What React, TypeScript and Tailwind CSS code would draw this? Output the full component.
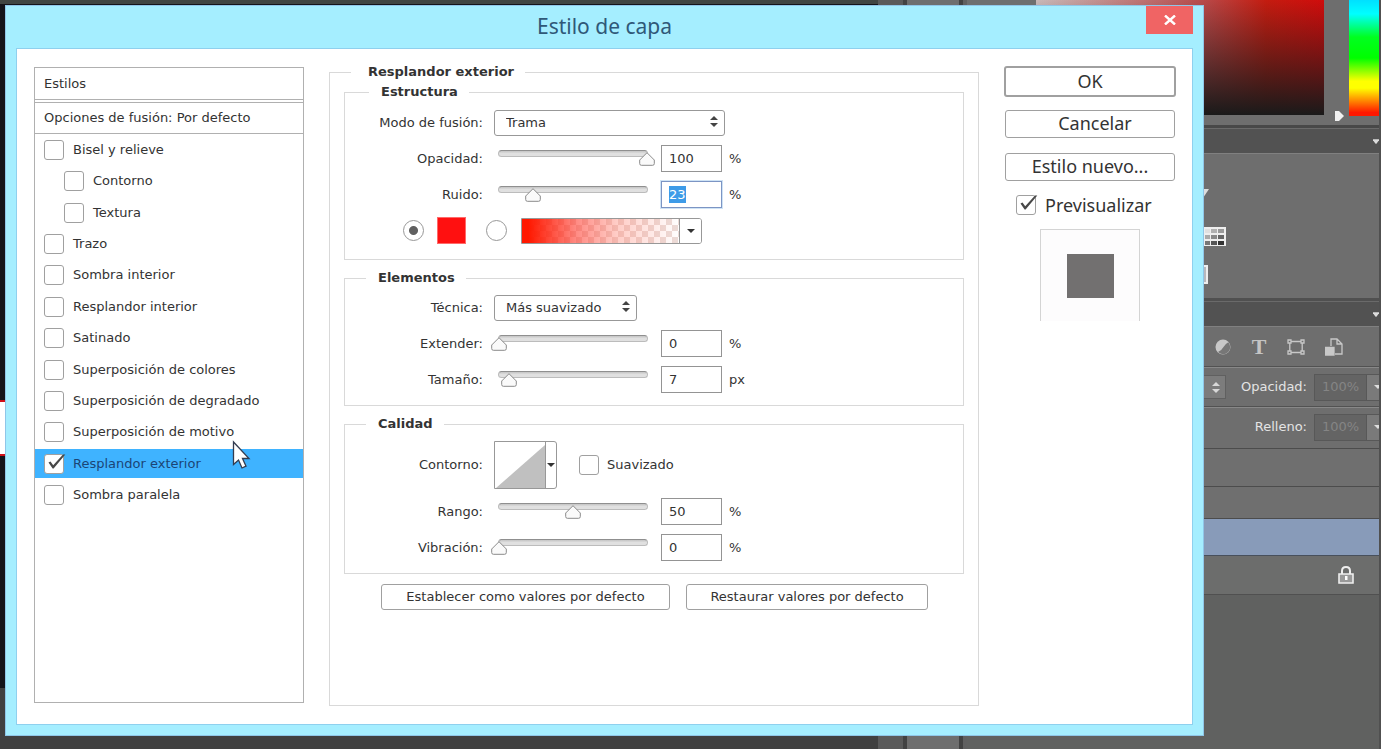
import { useState, type ReactNode } from "react";

type Effect = { name: string; nested?: boolean; checked?: boolean };

const EFFECTS: Effect[] = [
  { name: "Bisel y relieve" },
  { name: "Contorno", nested: true },
  { name: "Textura", nested: true },
  { name: "Trazo" },
  { name: "Sombra interior" },
  { name: "Resplandor interior" },
  { name: "Satinado" },
  { name: "Superposición de colores" },
  { name: "Superposición de degradado" },
  { name: "Superposición de motivo" },
  { name: "Resplandor exterior", checked: true },
  { name: "Sombra paralela" },
];

function Check({ id, defaultChecked }: { id: string; defaultChecked?: boolean }) {
  return (
    <span className="relative block size-5 shrink-0">
      <input
        id={id}
        type="checkbox"
        defaultChecked={defaultChecked}
        className="peer block size-5 appearance-none rounded-[3px] border border-[#a0a0a0] bg-white"
      />
      <svg
        viewBox="0 0 22 20"
        className="pointer-events-none absolute top-0 left-0 hidden h-5 w-[22px] peer-checked:block"
      >
        <path d="M4.500 8.500 6.500 7.500 9.200 11.300 19 .6h2.300L9.600 14.500H8.600z" fill="#484848" />
      </svg>
    </span>
  );
}

function UpDown({ className }: { className: string }) {
  return (
    <svg viewBox="0 0 8 11" className={className} fill="currentColor">
      <path d="M4 0l4 4H0zM4 11l4-4H0z" />
    </svg>
  );
}

function Picker({ id, value, width }: { id: string; value: string; width: string }) {
  return (
    <span className={`relative block ${width}`}>
      <select
        id={id}
        className="block h-[26px] w-full appearance-none rounded-[3px] border border-[#989898] bg-white pl-[11px]"
      >
        <option>{value}</option>
      </select>
      <UpDown className="pointer-events-none absolute top-[6px] right-[7px] h-[11px] w-2 text-[#444]" />
    </span>
  );
}

function Field({ id, label, children }: { id: string; label: string; children: ReactNode }) {
  return (
    <div className="flex items-center gap-[11px]">
      <label htmlFor={id} className="w-[138px] text-right">
        {label}
      </label>
      {children}
    </div>
  );
}

type SliderProps = {
  id: string;
  label: string;
  value: number;
  max?: number;
  unit?: string;
  active?: boolean;
};

function SliderField({ id, label, value, max = 100, unit = "%", active }: SliderProps) {
  const [current, setCurrent] = useState(value);
  return (
    <Field id={id} label={label}>
      <div className="flex items-center">
        <span className="relative -ml-[3px] block h-[27px] w-[164px]">
          <span className="mx-[7px] mt-[5px] block h-[7px] rounded-full border border-[#bcbcbc] border-t-[#8f8f8f] bg-[linear-gradient(to_bottom,#c4c4c4,#e0e0e0_50%)]" />
          <span className="pointer-events-none absolute top-[7px] right-4 left-0">
            <svg
              viewBox="0 0 16 14"
              className="absolute h-[14px] w-4"
              style={{ left: `${(current / max) * 100}%` }}
            >
              <path
                d="M8 .7 15.300 8v3.600q0 1.700-1.700 1.700H2.400Q.7 13.300.7 11.600V8z"
                fill="#fafafa"
                stroke="#8a8a8a"
              />
            </svg>
          </span>
          <input
            type="range"
            aria-label={label}
            min={0}
            max={max}
            value={current}
            onChange={(e) => setCurrent(Number(e.target.value))}
            className="absolute inset-0 w-full opacity-0"
          />
        </span>
        <span
          className={`ml-[6px] flex h-[27px] w-[61px] items-center border px-[7px] ${
            active ? "border-[#7c95c4] outline outline-[#cfe3f5]" : "border-[#949494]"
          }`}
        >
          <input
            id={id}
            type="text"
            value={current}
            onChange={(e) => setCurrent(Number(e.target.value) || 0)}
            className={`h-[17px] outline-none ${
              active ? "w-[17px] bg-[#3d9be8] text-white" : "w-full text-[#333]"
            }`}
          />
        </span>
        <span className="ml-[7px]">{unit}</span>
      </div>
    </Field>
  );
}

function Group({
  title,
  inset,
  padding,
  children,
}: {
  title: string;
  inset: string;
  padding: string;
  children: ReactNode;
}) {
  return (
    <fieldset className="min-w-0 border border-[#d9d9d9]">
      <legend className={`h-5 pr-[11px] pl-[12px] text-[13px] leading-5 font-bold ${inset}`}>
        {title}
      </legend>
      <div className={`flex flex-col gap-[9px] ${padding}`}>{children}</div>
    </fieldset>
  );
}

const BUTTON = "rounded-[3px] border border-[#a0a0a0] bg-white";

function Dialog() {
  return (
    <section
      role="dialog"
      aria-labelledby="dialog-title"
      className="absolute top-[5px] right-[177px] bottom-[13px] left-[5px] flex flex-col border border-[#8fc6e8] bg-[#a5eeff] px-[10px] pb-[10px] font-['DejaVu_Sans',sans-serif] text-[13px] leading-4 text-[#333]"
    >
      <header className="relative flex h-[42px] shrink-0 items-center justify-center pb-[2px]">
        <h1
          id="dialog-title"
          className="font-['Noto_Sans',sans-serif] text-[21px] leading-6 text-[#2f5878]"
        >
          Estilo de capa
        </h1>
        <button
          aria-label="Cerrar"
          className="absolute top-0 right-0 flex h-7 w-[47px] items-center justify-center bg-[#f06464]"
        >
          <svg viewBox="0 0 12 10" className="h-[10px] w-3" stroke="#fff" strokeWidth="2.400">
            <path d="M1 .5 11 9.500M11 .5 1 9.500" />
          </svg>
        </button>
      </header>

      <div className="flex min-h-0 flex-1 border border-[#8fd0ee] bg-white pr-4 pb-[18px] pl-[17px]">
        <div className="mt-[18px] mb-[3px] flex w-[270px] shrink-0 flex-col border border-[#b0b0b0]">
          <h2 className="flex h-[32px] items-center border-b border-[#b0b0b0] pl-[9px]">Estilos</h2>
          <div className="mt-[2px] flex h-[32px] items-center border-y border-[#b0b0b0] pl-[9px]">
            Opciones de fusión: Por defecto
          </div>
          <ul className="grid h-[377px] grid-rows-12">
            {EFFECTS.map((effect, i) => (
              <li
                key={effect.name}
                className={`flex h-[29px] items-center gap-[9px] self-center ${
                  effect.nested ? "pl-[29px]" : "pl-[9px]"
                } ${effect.checked ? "bg-[#3fb3ff] text-[#1c4576]" : ""}`}
              >
                <Check id={`effect-${i}`} defaultChecked={effect.checked} />
                <label htmlFor={`effect-${i}`}>{effect.name}</label>
              </li>
            ))}
          </ul>
        </div>

        <fieldset className="mt-[13px] ml-[25px] min-w-0 flex-1 border border-[#d9d9d9] px-[14px]">
          <legend className="ml-[7px] h-5 pr-[11px] pl-[17px] leading-5 font-bold">
            Resplandor exterior
          </legend>
          <div className="flex flex-col gap-2">
            <Group title="Estructura" inset="ml-[24px]" padding="pt-2 pb-[15px]">
              <Field id="blend" label="Modo de fusión:">
                <Picker id="blend" value="Trama" width="w-[231px]" />
              </Field>
              <SliderField id="opacity" label="Opacidad:" value={100} />
              <SliderField id="noise" label="Ruido:" value={23} active />
              <div className="flex h-[27px] items-center pl-[58px]">
                <input
                  type="radio"
                  name="fill"
                  aria-label="Color"
                  defaultChecked
                  className="size-[21px] appearance-none rounded-full border border-[#989898] bg-white checked:bg-[radial-gradient(circle,#606060_4px,#fff_5px)]"
                />
                <button
                  aria-label="Elegir color"
                  className="ml-[13px] h-[27px] w-[29px] border border-[#ff6a6a] bg-[#ff1010]"
                />
                <input
                  type="radio"
                  name="fill"
                  aria-label="Degradado"
                  className="ml-5 size-[21px] appearance-none rounded-full border border-[#989898] bg-white checked:bg-[radial-gradient(circle,#606060_4px,#fff_5px)]"
                />
                <button
                  aria-label="Elegir degradado"
                  className="ml-[14px] flex h-[26px] w-[181px] overflow-hidden rounded-r-[3px] border border-[#989898]"
                >
                  <span className="h-full flex-1 bg-[linear-gradient(to_right,#ff1800_4%,#ff403499_35%,#ff807066_60%,#ffffff00_100%),conic-gradient(#fff_25%,#ecdcd8_0_50%,#fff_0_75%,#ecdcd8_0)] bg-[length:100%_100%,12px_12px]" />
                  <span className="flex h-full w-[22px] items-center justify-center border-l border-[#989898] bg-white">
                    <svg viewBox="0 0 8 4" className="h-1 w-2">
                      <path d="M0 0h8L4 4z" fill="#333" />
                    </svg>
                  </span>
                </button>
              </div>
            </Group>

            <Group title="Elementos" inset="ml-[21px]" padding="pt-[7px] pb-3">
              <Field id="technique" label="Técnica:">
                <Picker id="technique" value="Más suavizado" width="w-[143px]" />
              </Field>
              <SliderField id="spread" label="Extender:" value={0} />
              <SliderField id="size" label="Tamaño:" value={7} unit="px" />
            </Group>

            <Group title="Calidad" inset="ml-[21px]" padding="pt-[7px] pb-3">
              <div className="flex items-center">
                <Field id="contour" label="Contorno:">
                  <button
                    id="contour"
                    className="flex h-12 w-[63px] overflow-hidden rounded-r-[3px] border border-[#989898]"
                  >
                    <svg viewBox="0 0 50 46" className="h-full w-[50px]" preserveAspectRatio="none">
                      <path d="M1 46 50 3v43z" fill="#c0c0c0" />
                    </svg>
                    <span className="flex h-full flex-1 items-center justify-center border-l border-[#989898]">
                      <svg viewBox="0 0 8 4" className="h-1 w-2">
                        <path d="M0 0h8L4 4z" fill="#333" />
                      </svg>
                    </span>
                  </button>
                </Field>
                <div className="ml-[22px] flex items-center gap-2">
                  <Check id="antialias" />
                  <label htmlFor="antialias">Suavizado</label>
                </div>
              </div>
              <SliderField id="range" label="Rango:" value={50} />
              <SliderField id="jitter" label="Vibración:" value={0} />
            </Group>
          </div>
          <div className="mt-[10px] ml-[37px] flex gap-4">
            <button className={`h-[26px] w-[289px] ${BUTTON}`}>
              Establecer como valores por defecto
            </button>
            <button className={`h-[26px] w-[242px] ${BUTTON}`}>
              Restaurar valores por defecto
            </button>
          </div>
        </fieldset>

        <div className="mt-[17px] ml-[25px] flex w-[172px] shrink-0 flex-col items-center font-['Noto_Sans',sans-serif] text-[18px] leading-6">
          <button className="flex h-[31px] w-full items-center justify-center rounded-[3px] border-2 border-[#a0a0a0] bg-white pb-[2px]">
            OK
          </button>
          <button
            className={`mt-[13px] flex h-[28px] w-[170px] items-center justify-center pb-[2px] pl-[10px] ${BUTTON}`}
          >
            Cancelar
          </button>
          <button
            className={`mt-[15px] flex h-[28px] w-[170px] items-center justify-center pb-[2px] ${BUTTON}`}
          >
            Estilo nuevo...
          </button>
          <div className="mt-[12px] flex items-center gap-[9px] self-start pl-[12px]">
            <Check id="preview" defaultChecked />
            <label htmlFor="preview">Previsualizar</label>
          </div>
          <div className="mt-[12px] flex h-[92px] w-[100px] items-center justify-center border border-b-0 border-[#d4d4d4] bg-[#fdfcfd]">
            <div className="h-[44px] w-[47px] bg-[#727070]" />
          </div>
        </div>
      </div>
    </section>
  );
}

function PanelHeader() {
  return (
    <div className="flex h-[26px] shrink-0 items-center justify-end border-t border-b border-t-[#6a6a6a] border-b-[#808080] bg-[#525252]">
      <svg viewBox="0 0 7 5" className="h-[5px] w-[6px]">
        <path d="M0 0h7v1L4 5H3L0 1z" fill="#dcdcdc" />
      </svg>
    </div>
  );
}

function LayerValue({ label }: { label: string }) {
  return (
    <>
      <span className="ml-auto pr-[7px]">{label}</span>
      <span className="flex h-[27px] w-[53px] items-center justify-center border border-[#585858] bg-[#646464] text-[#858585]">
        100%
      </span>
      <span className="flex h-[27px] w-[12px] items-center justify-end border-y border-[#585858] bg-[#7a7a7a]">
        <svg viewBox="0 0 5 4" className="h-1 w-[5px]">
          <path d="M0 0h5v3L4 4z" fill="#ddd" />
        </svg>
      </span>
    </>
  );
}

function Dock() {
  return (
    <aside className="flex w-[414px] shrink-0 flex-col border-r-2 border-[#505050] bg-[#606160] font-['DejaVu_Sans',sans-serif] text-[13px] leading-4 text-[#e4e4e4]">
      <div className="flex h-[125px] shrink-0 bg-[#6e6e6e] pl-[69px]">
        <div className="h-[115px] w-[288px] bg-[linear-gradient(to_bottom,transparent,#1a1a1a),linear-gradient(to_right,#c8b8b8,#b84a4a_58%,#c41c10_80%,#d00c0c)]" />
        <svg viewBox="0 0 10 12" className="mt-[110px] ml-[10px] h-3 w-[10px] shrink-0">
          <path d="M1 1h4l5 5-5 5H1z" fill="#f0f0f0" />
        </svg>
        <div className="ml-[5px] h-[116px] flex-1 bg-[linear-gradient(to_bottom,#00e0ff,#00ffff_12%,#00ff20_32%,#00ff00_50%,#ffff00_70%,#ffff00_76%,#ff1800_97%)]" />
      </div>
      <div className="h-[3px] shrink-0 bg-[#484848]" />
      <PanelHeader />
      <div className="flex h-[144px] shrink-0 flex-col bg-[#6e6e6e] pl-[229px]">
        <svg viewBox="0 0 30 100" className="mt-[30px] h-[100px] w-[30px]">
          <path d="M0 5h13L7 14H0z" fill="#ddd" />
          <path d="M0 43h30v19H0z" fill="#eee" />
          <path d="M9 45h5v4H9z" fill="#e0e0e0" />
          <path d="M15 45h6v4h-6z" fill="#b0b0b0" />
          <path d="M22 45h6v4h-6z" fill="#999" />
          <path d="M9 51h5v4H9z" fill="#aaa" />
          <path d="M15 51h6v4h-6z" fill="#888" />
          <path d="M22 51h6v4h-6z" fill="#666" />
          <path d="M9 57h5v4H9z" fill="#777" />
          <path d="M15 57h6v4h-6z" fill="#555" />
          <path d="M22 57h6v4h-6z" fill="#333" />
          <path d="M0 81h12v19H0z" fill="#eee" />
          <path d="M0 83h10v15H0z" fill="#b8b8bc" />
        </svg>
      </div>
      <div className="h-[3px] shrink-0 bg-[#505050]" />
      <PanelHeader />
      <div className="flex h-[40px] shrink-0 items-center gap-5 border-b border-[#525252] bg-[#6e6e6e] pl-[248px]">
        <svg viewBox="0 0 16 16" className="size-4">
          <circle cx="8" cy="8" r="7.500" fill="#c8c8c8" />
          <path d="M13.300 3.200A7 7 0 0 1 3 13Q7 11 8.500 8T13.300 3.200" fill="#777" />
        </svg>
        <span className="w-4 text-center font-['Liberation_Serif',serif] text-[22px] leading-6 font-bold text-[#c4c4c4]">
          T
        </span>
        <svg viewBox="0 0 18 16" className="h-4 w-[18px]" fill="none" stroke="#c8c8c8" strokeWidth="1.300">
          <path d="M4 2.500h10M4 13.500h10M2.800 4v8M15.200 4v8" />
          <path d="M1 1h3v3H1zM14 1h3v3h-3zM1 12h3v3H1zM14 12h3v3h-3z" />
        </svg>
        <svg viewBox="0 0 18 18" className="size-[18px]" fill="none" stroke="#c8c8c8" strokeWidth="1.300">
          <path d="M6 8V1h6l5 5v10h-7M12 1v5h5" />
          <path d="M.5 9.500H9V17H.5z" fill="#c8c8c8" />
        </svg>
      </div>
      <div className="flex h-[40px] shrink-0 items-center border-t border-b border-t-[#888] border-b-[#525252] bg-[#6e6e6e]">
        <span className="ml-[229px] flex h-[24px] w-[30px] items-center justify-end border border-[#606060] bg-[#7c7c7c] pr-[5px]">
          <UpDown className="h-[11px] w-2 text-[#d8d8d8]" />
        </span>
        <LayerValue label="Opacidad:" />
      </div>
      <div className="flex h-[42px] shrink-0 items-center border-t border-b border-t-[#888] border-b-[#4c4c4c] bg-[#6e6e6e] pb-[2px]">
        <LayerValue label="Relleno:" />
      </div>
      <div className="h-[38px] shrink-0 border-b border-[#4c4c4c] bg-[#6f6f6f]" />
      <div className="h-[32px] shrink-0 border-b border-[#4c4c4c] bg-[#6f6f6f]" />
      <div className="h-[37px] shrink-0 border-b border-[#48505c] bg-[#889bb9]" />
      <div className="flex h-[39px] shrink-0 items-center justify-end border-b border-[#505050] bg-[#6c6d6c] pr-[24px]">
        <svg viewBox="0 0 18 20" className="h-5 w-[18px]">
          <path d="M5 9V6q0-4 4-4t4 4v3" fill="none" stroke="#eee" strokeWidth="2" />
          <path d="M2 9h14v9H2z" fill="#999" stroke="#eee" strokeWidth="1.600" />
          <path d="M8 11h2.500v4H8z" fill="#fff" />
        </svg>
      </div>
    </aside>
  );
}

export default function App() {
  return (
    <main className="relative flex h-screen min-h-[749px] overflow-hidden bg-[#404040]">
      <div className="flex min-w-0 flex-1 flex-col bg-[#404040]">
        <div className="h-1 shrink-0 bg-[#404542]" />
        <div className="h-[396px] shrink-0 bg-[#14141a]" />
        <div className="h-[56px] shrink-0 border-y-2 border-[#d01018] bg-white" />
        <div className="h-[232px] shrink-0 bg-[#14141a]" />
      </div>
      <div className="w-[25px] shrink-0 bg-[#5a5a5a]" />
      <div className="w-[60px] shrink-0 border-x-4 border-[#424242] bg-[#6e6e6e]" />
      <div className="w-[4px] shrink-0 bg-[#606060]" />
      <Dock />
      <Dialog />
      <svg
        viewBox="0 0 20 30"
        className="pointer-events-none absolute top-[440px] left-[232px] h-[30px] w-5"
      >
        <path
          d="M1.500 2v22.500l5-4.500 3.500 8 4-1.800-3.500-7.700H17z"
          fill="#fff"
          stroke="#333c50"
          strokeWidth="1.300"
        />
      </svg>
    </main>
  );
}
